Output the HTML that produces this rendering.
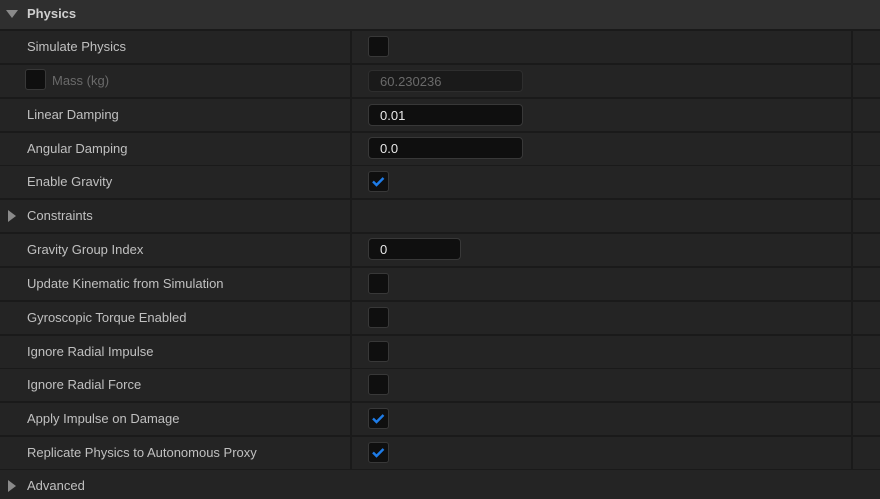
<!DOCTYPE html>
<html><head><style>
body{margin:0;width:880px;height:499px;background:#1a1a1a;overflow:hidden;font-family:"Liberation Sans",sans-serif;font-size:13px;color:#c0c0c0;position:relative}
.h{position:absolute;left:0;top:0;width:880px;height:29px;background:#2f2f2f}
.h span{position:absolute;left:27px;top:6px;font-weight:bold;color:#cfcfcf}
.r{position:absolute;left:0;width:880px;height:32px;background:#242424}
.l{position:absolute;left:27px;top:8px;white-space:nowrap}
.d1{position:absolute;left:350px;top:0;width:2px;height:100%;background:#1a1a1a}
.d2{position:absolute;left:851px;top:0;width:2px;height:100%;background:#1a1a1a}
.cb{position:absolute;left:368px;top:5px;width:19px;height:19px;background:#0f0f0f;border:1px solid #383838;border-radius:3px;box-sizing:border-box;width:21px;height:21px}
.in{position:absolute;left:368px;top:5px;width:155px;height:22px;background:#0f0f0f;border:1px solid #383838;border-radius:4px;box-sizing:border-box}
.in span{position:absolute;left:11px;top:3px;color:#e8e8e8}
.tri{position:absolute;left:8px;top:10px;width:0;height:0;border-top:6px solid transparent;border-bottom:6px solid transparent;border-left:8px solid #8a8a8a}
</style></head><body>
<div class="h"><div style="position:absolute;left:6px;top:10px;border-left:6px solid transparent;border-right:6px solid transparent;border-top:8px solid #8a8a8a"></div><span>Physics</span></div>

<div class="r" style="top:31px"><div class="l">Simulate Physics</div><div class="d1"></div><div class="d2"></div><div class="cb"></div></div>
<div class="r" style="top:65px"><div style="position:absolute;left:25px;top:4px;width:21px;height:21px;background:#0f0f0f;border:1px solid #383838;border-radius:3px;box-sizing:border-box"></div><div class="l" style="left:52px;color:#6a6a6a">Mass (kg)</div><div class="d1"></div><div class="d2"></div><div class="in" style="background:#1a1a1a;border-color:#2e2e2e"><span style="color:#6a6a6a">60.230236</span></div></div>
<div class="r" style="top:99px"><div class="l">Linear Damping</div><div class="d1"></div><div class="d2"></div><div class="in"><span>0.01</span></div></div>
<div class="r" style="top:133px"><div class="l">Angular Damping</div><div class="d1"></div><div class="d2"></div><div class="in" style="top:4px"><span>0.0</span></div></div>
<div class="r" style="top:166px"><div class="l">Enable Gravity</div><div class="d1"></div><div class="d2"></div><div class="cb"><svg width="19" height="19" viewBox="0 0 19 19" style="position:absolute;left:0;top:0"><path d="M4 9.5l3.5 3.5 7-7" stroke="#1e7ce8" stroke-width="2.4" fill="none"/></svg></div></div>
<div class="r" style="top:200px"><div class="tri"></div><div class="l">Constraints</div><div class="d1"></div><div class="d2"></div></div>
<div class="r" style="top:234px"><div class="l">Gravity Group Index</div><div class="d1"></div><div class="d2"></div><div class="in" style="width:93px;top:4px"><span>0</span></div></div>
<div class="r" style="top:268px"><div class="l">Update Kinematic from Simulation</div><div class="d1"></div><div class="d2"></div><div class="cb"></div></div>
<div class="r" style="top:302px"><div class="l">Gyroscopic Torque Enabled</div><div class="d1"></div><div class="d2"></div><div class="cb"></div></div>
<div class="r" style="top:336px"><div class="l">Ignore Radial Impulse</div><div class="d1"></div><div class="d2"></div><div class="cb"></div></div>
<div class="r" style="top:369px"><div class="l">Ignore Radial Force</div><div class="d1"></div><div class="d2"></div><div class="cb"></div></div>
<div class="r" style="top:403px"><div class="l">Apply Impulse on Damage</div><div class="d1"></div><div class="d2"></div><div class="cb"><svg width="19" height="19" viewBox="0 0 19 19" style="position:absolute;left:0;top:0"><path d="M4 9.5l3.5 3.5 7-7" stroke="#1e7ce8" stroke-width="2.4" fill="none"/></svg></div></div>
<div class="r" style="top:437px"><div class="l">Replicate Physics to Autonomous Proxy</div><div class="d1"></div><div class="d2"></div><div class="cb"><svg width="19" height="19" viewBox="0 0 19 19" style="position:absolute;left:0;top:0"><path d="M4 9.5l3.5 3.5 7-7" stroke="#1e7ce8" stroke-width="2.4" fill="none"/></svg></div></div>
<div class="r" style="top:470px;height:29px"><div class="tri"></div><div class="l">Advanced</div></div>
</body></html>
